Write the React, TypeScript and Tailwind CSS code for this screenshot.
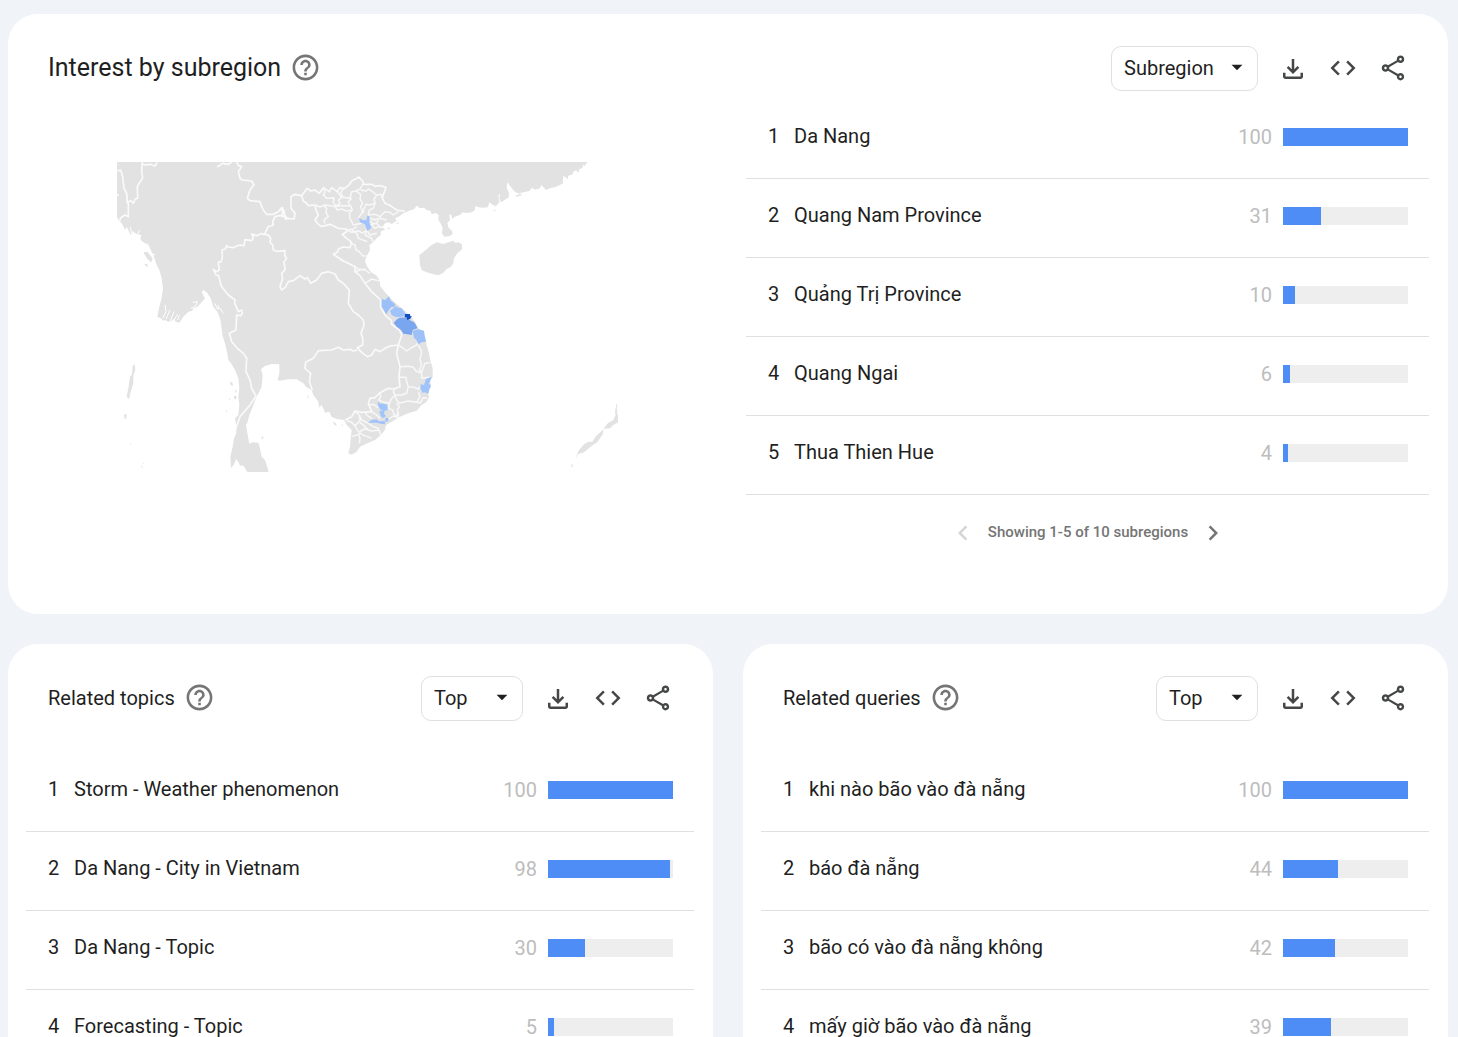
import { useId } from 'react';
import {
  MdArrowDropDown,
  MdChevronLeft,
  MdChevronRight,
  MdCode,
  MdHelpOutline,
  MdOutlineShare,
} from 'react-icons/md';

type Item = { label: string; value: number };

const subregions: Item[] = [
  { label: 'Da Nang', value: 100 },
  { label: 'Quang Nam Province', value: 31 },
  { label: 'Quảng Trị Province', value: 10 },
  { label: 'Quang Ngai', value: 6 },
  { label: 'Thua Thien Hue', value: 4 },
];

const topics: Item[] = [
  { label: 'Storm - Weather phenomenon', value: 100 },
  { label: 'Da Nang - City in Vietnam', value: 98 },
  { label: 'Da Nang - Topic', value: 30 },
  { label: 'Forecasting - Topic', value: 5 },
];

const queries: Item[] = [
  { label: 'khi nào bão vào đà nẵng', value: 100 },
  { label: 'báo đà nẵng', value: 44 },
  { label: 'bão có vào đà nẵng không', value: 42 },
  { label: 'mấy giờ bão vào đà nẵng', value: 39 },
];

function DownloadIcon() {
  return (
    <svg viewBox="0 -960 960 960" className="size-[30px]" fill="currentColor" aria-hidden="true">
      <path d="M480-320 280-520l56-58 104 104v-326h80v326l104-104 56 58-200 200ZM240-160q-33 0-56.5-23.5T160-240v-120h80v120h480v-120h80v120q0 33-23.5 56.5T720-160H240Z" />
    </svg>
  );
}

function CardHeader({
  title,
  large,
  options,
}: {
  title: string;
  large?: boolean;
  options: string[];
}) {
  const id = useId();
  const button = 'flex w-[50px] h-[45px] items-center justify-center text-[#444746]';

  return (
    <div className="flex items-center pl-10 pr-[30px]">
      <h2 id={id} className={`pb-0.5 ${large ? 'text-[25px]' : 'text-[20px]'}`}>
        {title}
      </h2>
      <button type="button" aria-label="Help" className="ml-[9px] pb-0.5 text-[#757575]">
        <MdHelpOutline className="size-[31px]" />
      </button>
      <div className="relative ml-auto mr-[10px]">
        <select
          aria-labelledby={id}
          className={`h-[45px] appearance-none rounded-[10px] border border-[#e0e0e0] bg-white pb-0.5 pl-3 text-[20px] ${
            large ? 'w-[147px]' : 'w-[102px]'
          }`}
        >
          {options.map((option) => (
            <option key={option}>{option}</option>
          ))}
        </select>
        <MdArrowDropDown className="pointer-events-none absolute right-2 top-2 size-[26px]" />
      </div>
      <button type="button" aria-label="Download" className={button}>
        <DownloadIcon />
      </button>
      <button type="button" aria-label="Embed" className={`${button} pb-0.5`}>
        <MdCode className="size-[30px]" />
      </button>
      <button type="button" aria-label="Share" className={`${button} pb-0.5`}>
        <MdOutlineShare className="size-[30px]" />
      </button>
    </div>
  );
}

function RankedList({ items }: { items: Item[] }) {
  return (
    <ol className="ml-[18px] mr-[19px]">
      {items.map((item, i) => (
        <li
          key={item.label}
          className="flex h-[79px] items-center border-b border-[#e0e0e0] pb-1 pl-[22px] pr-[21px] text-[20px] leading-6"
        >
          <span className="w-[26px] pb-0.5">{i + 1}</span>
          <span className="flex-1 pb-0.5">{item.label}</span>
          <span className="mr-[11px] text-[#bdbdbd]">{item.value}</span>
          <div className="h-[18px] w-[125px] bg-[#eeeeee]">
            <div className="h-full bg-[#4e8df6]" style={{ width: `${Math.floor(item.value * 1.25)}px` }} />
          </div>
        </li>
      ))}
    </ol>
  );
}

function RegionMap() {
  return (
    <svg viewBox="21 18 1506 936" className="w-full max-w-[502px]" role="img" aria-label="Map of interest by subregion">
      {/* mainland */}
      <path
        fill="#e2e2e2"
        d="M21 21H1433L1424 32 1420 30 1416 40 1408 42 1405 53 1398 46 1390 50 1388 58 1375 62 1373 72 1360 62 1358 78 1360 84 1350 90 1335 97 1322 99 1308 105 1302 98 1294 90 1290 100 1275 104 1266 98 1258 108 1240 112 1225 116 1210 106 1200 92 1192 82 1190 98 1197 114 1196 127 1180 138 1172 142 1168 128 1170 116 1165 120 1168 142 1158 154 1145 148 1138 142 1134 157 1118 158 1106 157 1096 153 1094 166 1085 172 1070 174 1058 172 1050 180 1034 185 1026 192 1024 180 1018 178 1020 196 1012 205 1016 218 1026 228 1028 236 1020 243 1003 245 996 235 998 220 992 205 985 195 986 180 978 174 965 178 962 168 950 165 942 158 930 160 920 152 912 163 895 168 880 175 868 184 855 190 860 198 845 207 836 202 825 205 818 215 825 225 813 228 812 240 800 250 790 262 778 270 780 285 772 300 765 318 770 332 782 350 800 362 810 378 810 392 825 412 840 428 855 443 870 455 885 468 895 478 905 488 915 500 920 510 928 523 940 530 946 550 950 570 957 595 962 620 968 640 968 667 960 675 963 695 952 713 958 725 950 740 935 750 920 767 895 775 870 785 840 803 828 810 825 825 810 842 795 855 772 865 750 875 740 890 725 899 715 895 720 875 722 850 725 825 710 810 702 795 680 792 665 786 658 770 645 773 640 760 635 750 628 758 625 740 610 720 605 705 588 695 580 685 560 673 535 673 510 677 503 675 508 655 508 628 485 627 465 633 453 643 458 660 455 695 440 725 428 755 418 780 413 800 408 810 413 840 418 866 428 862 445 863 450 880 455 905 465 915 470 930 476 951H412L405 940 400 932 390 932 385 920 378 912 372 928 363 940 361 905 368 875 372 850 378 838 380 815 375 790 385 780 388 750 385 725 388 700 385 670 375 645 365 628 355 615 352 595 345 565 337 540 333 505 330 490 322 470 310 455 302 430 290 412 280 405 275 412 285 430 275 442 262 455 250 460 246 468 235 470 220 485 208 503 198 500 190 492 185 498 175 500 165 495 160 497 150 488 142 487 148 455 155 430 159 400 155 370 148 345 140 330 130 300 125 290 118 275 105 265 90 255 94 240 80 238 70 230 62 240 50 215 46 225 35 205 25 195 21 185Z"
      />
      <g fill="#e2e2e2">
        {/* Hainan */}
        <path d="M928 300 940 291 955 278 965 270 980 262 1000 267 1015 262 1030 257 1036 264 1045 262 1056 268 1056 283 1042 295 1032 310 1030 325 1022 336 1010 342 1000 353 985 361 970 358 950 352 935 345 930 330Z" />
        {/* Andaman islands */}
        <path d="M68 633 74 628 76 645 70 660 70 685 62 710 57 733 50 725 55 700 60 665 66 658ZM42 778 50 778 49 790 44 793ZM59 865l5 2-3 3ZM93 930l6 7-3 2ZM100 922l3 5-3 1Z" />
        {/* Palawan */}
        <path d="M1396 912 1405 888 1422 868 1436 860 1447 860 1458 844 1480 823 1478 838 1462 862 1445 872 1434 882 1422 892 1404 898ZM1480 822 1494 804 1510 795 1516 782 1518 770 1524 780V802L1510 810 1500 820ZM1519 748h3l-2 16 3 6-7 8-1-7ZM1384 928h4l-1 10-3-3Z" />
        {/* small coastal islands */}
        <path d="M100 292 112 290 118 298 128 310 124 322 112 312ZM102 326l10 2 3 8-6-2ZM360 680l7 2 2 12-7-4ZM372 722l8 1-2 10-6-2ZM356 730l5 2-2 6ZM348 765l4 4-3 4ZM376 702l5 8-5 4ZM455 845l5 0v6h-6ZM668 800l8 3 5 10-8-4ZM696 805l3 7-4 0ZM593 718l3 8-3 6ZM1215 122l18-6 2 5-14 4ZM1160 162l-10 5 2 3ZM855 208l10-6 3 3ZM830 220l10-3-3 6Z" />
      </g>

      {/* country borders */}
      <g fill="none" stroke="#fafafa" strokeWidth="5" strokeLinejoin="round">
        <path d="M97 21 95 50 98 70 88 84 82 95 83 130 75 133 70 145 62 137 55 140 55 185 45 180 32 188 28 200M21 48 32 45 38 65 42 100 50 115 52 145M21 120h6M95 26 105 30 120 28 135 33 142 22M322 36 338 25 355 28 365 22" />
        <path d="M380 21 385 32 395 35 385 50 390 70 397 75 425 78 432 90 420 105 412 130 420 137 450 140 455 155 460 165 470 178 490 178 505 170 517 158 522 168 517 180 495 185 488 200 490 210 475 215 463 238M522 168 526 192 540 190M510 158 518 168 515 185 525 182 532 190 552 192 555 175 543 160 543 125 555 118 575 122" />
        <path d="M463 238 452 236 440 242 425 237 430 248 425 257 405 254 402 272 388 270 370 278 355 276 350 272 346 282 336 285 337 305 334 320 325 322 328 345 320 350 310 343 318 360 326 362 330 380 335 395 355 420 375 435 374 445 380 458 385 470 395 465 397 475 392 482 380 480 378 525 358 535 365 560 382 580 400 595 410 610 408 650 420 675 425 700 438 723 420 750 390 785 378 820" />
        <path d="M463 238 475 240 482 250 480 262 488 270 490 285 500 289 525 287 524 300 530 310 522 320 525 345 515 355 518 370 510 395 515 405 525 398 535 380 550 377 570 362 585 372 592 368 602 385 620 375 635 355 655 350 675 357 685 375 700 385 718 405 715 445 730 470 745 480 760 495 762 510 753 535 758 550 758 570 742 578 755 592 772 605 785 600 795 583 810 590 825 580 840 573 865 570" />
        <path d="M742 585 730 588 720 583 700 585 685 577 665 585 625 587 610 610 587 622 585 640 602 655 598 680 607 705" />
        <path d="M575 122 592 100 602 108 615 105 628 115 640 98 658 110 665 98 682 110 690 97 700 102 715 92 725 78 747 66 758 78 760 88 785 88 795 94 810 92 828 97 822 115 815 125 825 145 838 150 850 158 862 166 885 168" />
        <path d="M575 122 580 138 590 145 595 152 615 150 618 165 625 180 615 195 622 205 635 215 660 208 685 220 710 222 708 232 697 238 710 250 725 262 720 278 700 276 685 282 682 292 670 298 700 318 715 325 735 335 735 350 750 362 765 385 785 410 812 435 812 457 826 482 844 496 845 508 868 525 875 540 865 570 860 595 870 635 867 665 870 695 850 702 835 700 810 713 795 728 780 730 775 745 785 770 755 772 735 768 725 785 705 795" />
      </g>

      {/* province borders */}
      <g fill="none" stroke="#f8f8f8" strokeWidth="4.5" strokeLinejoin="round">
        <path d="M640 98 645 112 640 120 650 130 672 128 670 142 678 155 660 152 645 150 630 156 615 150M682 110 695 128 685 135 690 145 675 155M700 97 692 115 700 127 720 130 725 110 738 108 750 102 758 88M725 130 715 140 720 152 690 152 675 155M675 155 682 165 695 162 710 168 722 165M738 108 752 118 750 132 758 145 752 155 758 170 745 190M752 105 768 108 775 102 785 108 800 120 792 132 795 145 778 150 768 148 760 165 760 175M795 145 790 160 778 165 775 180 795 178 810 185 825 170 840 172 850 180 865 170M800 120 812 118 822 125M722 152 727 165 718 175 720 190 730 210 755 205M645 205 642 195 655 185 648 172 650 160 640 150M780 190 795 194 810 190 830 195M785 200 788 212 795 220 808 214 820 218M740 215 730 222 710 226M710 226 725 232 745 228 758 234 770 225 780 240 800 235M770 228 765 240 785 250 790 262M725 225 740 235 745 250 772 260M720 265 735 270 738 285 748 290 758 302 770 303M735 335 745 342 765 345 780 355M735 350 750 345 768 342M765 385 785 372 810 378M782 196 775 210 800 205 812 218M800 205 805 195" />
        <path d="M870 535 882 530 895 536 908 523M865 570 876 577 890 588 905 578 920 570 925 560M925 570 935 590 930 615 935 630 928 645 935 652 945 625 960 623M870 635 895 634 910 637 918 648 935 655 935 670 960 667M867 667 888 667 890 680 895 695 912 697 925 702 930 695M895 695 890 715 875 720 855 720 850 710 855 700M855 720 860 735 868 745 895 738 920 742 930 725 925 710M810 713 812 725 806 735 822 742 838 745 845 730 855 722M838 745 836 760 848 765 852 778 865 782 862 765 868 755 860 745M920 740 930 745 940 728 952 730M835 793 850 783 865 788 865 770M785 770 800 780 810 790M735 770 748 780 755 795 775 805 790 815 805 820 812 840M710 797 722 800 735 812 742 825 755 838 785 850M735 812 750 797 748 782M725 845 745 838 750 850 748 865M745 840 752 828 765 822 785 828 805 826M765 772 772 782 785 790M775 750 790 748 805 758M750 802 762 812 775 825" />
      </g>

      {/* highlighted provinces */}
      <g fill="#a1c3fb">
        <path d="M747 188 758 195 769 196 772 182 778 184 779 205 784 218 772 228 765 208 750 202Z" />
        <path d="M840 467 847 462 857 453 865 458 875 460 887 477 880 484 868 487 855 485 845 480Z" />
        <path d="M932 688 942 690 948 672 965 665 960 680 956 685 963 692 958 702 955 717 945 712 938 713 931 700Z" />
        <path d="M803 740 812 746 820 746 832 749 833 765 822 768 812 764 805 754ZM808 768 824 766 822 776 828 784 818 789 812 782ZM773 803 785 795 800 793 806 799 824 798 826 808 812 806 800 803ZM826 788 836 790 835 798 826 801Z" />
      </g>
      <path fill="#9bbff9" d="M815 432 825 435 837 424 842 437 856 447 853 455 843 457 835 467 829 478 820 463 815 455Z" />
      <path fill="#9dc0f9" d="M908 527 925 523 942 527 944 542 948 560 935 562 925 568 920 556 912 548Z" />
      <path fill="#7aa5ef" d="M851 503 862 492 870 488 888 487 900 496 912 502 918 510 922 520 908 525 905 540 892 538 880 536 873 525 860 515Z" />
      <path fill="#1150c0" d="M885 477h15l1 7 5 0-6 8-9 3 0-7-7-2Z" />

      {/* river mouths and inlets */}
      <g fill="none" stroke="#ffffff" strokeWidth="3">
        <path d="M165 450 168 470 158 490M180 465 168 492M192 470 180 500M202 478 190 500M208 480 203 495M248 442 262 440 255 455 242 460M315 445 322 462 330 460 340 475M325 450v12M60 215 65 235 80 245M88 225 82 240 95 260M68 228 75 250 90 260M110 285 120 295 135 300M118 272 108 265" />
      </g>
    </svg>
  );
}

export default function App() {
  return (
    <main className="flex min-h-screen flex-col gap-[30px] bg-[#f0f4f9] pl-2 pr-[10px] pt-[14px] font-[Roboto,'Open_Sans',sans-serif] text-[#1f1f1f]">
      <section className="rounded-[30px] bg-white pb-11 pt-8">
        <CardHeader title="Interest by subregion" large options={['Subregion', 'City']} />
        <div className="mt-[9px] flex">
          <div className="flex w-1/2 items-start justify-center pt-[61px]">
            <RegionMap />
          </div>
          <div className="w-1/2">
            <RankedList items={subregions} />
            <div className="flex h-[75px] items-center justify-center gap-[10px] text-[15px] font-medium text-[#757575]">
              <button type="button" aria-label="Previous" disabled className="text-[#d5d5d5]">
                <MdChevronLeft className="size-[30px]" />
              </button>
              <span>Showing 1-5 of 10 subregions</span>
              <button type="button" aria-label="Next">
                <MdChevronRight className="size-[30px]" />
              </button>
            </div>
          </div>
        </div>
      </section>

      <div className="grid grid-cols-2 gap-[30px]">
        <section className="rounded-t-[30px] bg-white pt-8">
          <CardHeader title="Related topics" options={['Top', 'Rising']} />
          <div className="mt-8">
            <RankedList items={topics} />
          </div>
        </section>
        <section className="rounded-t-[30px] bg-white pt-8">
          <CardHeader title="Related queries" options={['Top', 'Rising']} />
          <div className="mt-8">
            <RankedList items={queries} />
          </div>
        </section>
      </div>
    </main>
  );
}
